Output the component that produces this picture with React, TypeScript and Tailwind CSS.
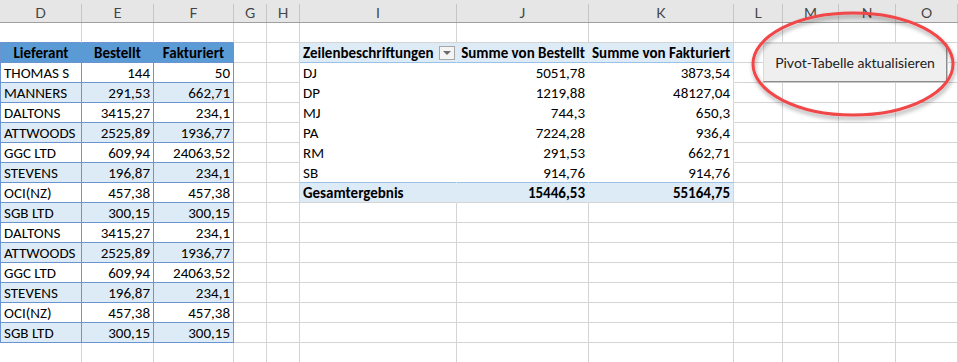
import clsx from 'clsx';

const COLS = 'grid grid-cols-[82px_72px_80px_33px_33px_157px_132px_145px_49px_56px_57px_1fr]';
const LETTERS = ['D', 'E', 'F', 'G', 'H', 'I', 'J', 'K', 'L', 'M', 'N', 'O'];

const lieferanten: [string, string, string][] = [
  ['THOMAS S', '144', '50'],
  ['MANNERS', '291,53', '662,71'],
  ['DALTONS', '3415,27', '234,1'],
  ['ATTWOODS', '2525,89', '1936,77'],
  ['GGC LTD', '609,94', '24063,52'],
  ['STEVENS', '196,87', '234,1'],
  ['OCI(NZ)', '457,38', '457,38'],
  ['SGB LTD', '300,15', '300,15'],
  ['DALTONS', '3415,27', '234,1'],
  ['ATTWOODS', '2525,89', '1936,77'],
  ['GGC LTD', '609,94', '24063,52'],
  ['STEVENS', '196,87', '234,1'],
  ['OCI(NZ)', '457,38', '457,38'],
  ['SGB LTD', '300,15', '300,15'],
];

const pivot: [string, string, string][] = [
  ['DJ', '5051,78', '3873,54'],
  ['DP', '1219,88', '48127,04'],
  ['MJ', '744,3', '650,3'],
  ['PA', '7224,28', '936,4'],
  ['RM', '291,53', '662,71'],
  ['SB', '914,76', '914,76'],
];

type CellProps = {
  text?: string;
  right?: boolean;
  bold?: boolean;
  className?: string;
  children?: React.ReactNode;
};

// one worksheet cell, gridline on the right and bottom by default
function Cell({ text, right, bold, className, children }: CellProps) {
  return (
    <div
      className={clsx(
        'h-5 px-[3px] leading-[20px] whitespace-nowrap border-r border-b',
        right && 'text-right',
        bold && 'font-bold',
        className ?? 'border-[#d4d4d4]',
      )}
    >
      {children ?? text}
    </div>
  );
}

const BLUE = 'border-[#6b93cf]';

function Row({ r }: { r: number }) {
  const cells: React.ReactNode[] = [];

  // left table D..F
  if (r === 1) {
    cells.push(<Cell key="d" className={clsx('border-[#d4d4d4] border-b-[#6b93cf]')} />);
    cells.push(<Cell key="e" className="border-[#d4d4d4] border-b-[#6b93cf]" />);
    cells.push(<Cell key="f" className="border-[#d4d4d4] border-b-[#6b93cf]" />);
  } else if (r === 2) {
    cells.push(<Cell key="d" text="Lieferant" bold className={clsx('bg-[#5b9bd5] text-center border-l', BLUE)} />);
    cells.push(<Cell key="e" text="Bestellt" bold className={clsx('bg-[#5b9bd5] text-center', BLUE)} />);
    cells.push(<Cell key="f" text="Fakturiert" bold className={clsx('bg-[#5b9bd5] text-center', BLUE)} />);
  } else if (r >= 3 && r <= 16) {
    const [a, b, c] = lieferanten[r - 3];
    const fill = r % 2 === 0 ? 'bg-[#ddebf7]' : 'bg-white';
    cells.push(<Cell key="d" text={a} className={clsx(fill, 'border-l', BLUE)} />);
    cells.push(<Cell key="e" text={b} right className={clsx(fill, BLUE)} />);
    cells.push(<Cell key="f" text={c} right className={clsx(fill, BLUE)} />);
  } else {
    cells.push(<Cell key="d" />, <Cell key="e" />, <Cell key="f" />);
  }

  // G, H
  cells.push(<Cell key="g" />, <Cell key="h" />);

  // pivot I..K
  if (r === 2) {
    cells.push(
      <Cell key="i" className="bg-[#ddebf7] border-b-[#9bc2e6] border-r-transparent">
        <div className="flex items-center justify-between h-full font-bold">
          <span>Zeilenbeschriftungen</span>
          <span className="flex items-center justify-center w-4 h-[14px] mr-[-2px] border border-[#a6a6a6] bg-[#f4f4f4]">
            <span className="w-0 h-0 border-l-[4px] border-r-[4px] border-t-[4px] border-l-transparent border-r-transparent border-t-[#6a6a6a]" />
          </span>
        </div>
      </Cell>,
    );
    cells.push(<Cell key="j" text="Summe von Bestellt" bold right className="bg-[#ddebf7] border-b-[#9bc2e6] border-r-transparent" />);
    cells.push(<Cell key="k" text="Summe von Fakturiert" bold right className="bg-[#ddebf7] border-b-[#9bc2e6] border-r-[#d4d4d4]" />);
  } else if (r >= 3 && r <= 8) {
    const [a, b, c] = pivot[r - 3];
    const bottom = r === 8 ? 'border-b-[#9bc2e6]' : 'border-b-transparent';
    cells.push(<Cell key="i" text={a} className={clsx('bg-white border-r-transparent', bottom)} />);
    cells.push(<Cell key="j" text={b} right className={clsx('bg-white border-r-transparent', bottom)} />);
    cells.push(<Cell key="k" text={c} right className={clsx('bg-white border-r-[#d4d4d4]', bottom)} />);
  } else if (r === 9) {
    cells.push(<Cell key="i" text="Gesamtergebnis" bold className="bg-[#ddebf7] border-[#d4d4d4] border-r-transparent" />);
    cells.push(<Cell key="j" text="15446,53" bold right className="bg-[#ddebf7] border-[#d4d4d4] border-r-transparent" />);
    cells.push(<Cell key="k" text="55164,75" bold right className="bg-[#ddebf7] border-[#d4d4d4]" />);
  } else {
    cells.push(<Cell key="i" />, <Cell key="j" />, <Cell key="k" />);
  }

  // L..O
  cells.push(<Cell key="l" />, <Cell key="m" />, <Cell key="n" />, <Cell key="o" />);

  return <div className={COLS}>{cells}</div>;
}

export default function App() {
  const rows = Array.from({ length: 17 }, (_, i) => i + 1);
  return (
    <div className="relative w-[958px] h-[362px] overflow-hidden bg-white text-[15px] text-black font-['Carlito','Calibri','Liberation_Sans',sans-serif]">
      {/* column headers */}
      <div className="h-[23px] bg-[#e6e6e6] pt-1 border-b border-[#9f9f9f]">
        <div className={clsx(COLS, 'h-full')}>
          {LETTERS.map((l) => (
            <div
              key={l}
              className="border-r border-[#c6c6c6] text-center text-[14px] leading-[18px] text-[#444] font-['Lato','Liberation_Sans',sans-serif]"
            >
              {l}
            </div>
          ))}
        </div>
      </div>

      {rows.map((r) => (
        <Row key={r} r={r} />
      ))}

      {/* button from the sheet */}
      <button className="absolute left-[763px] top-[43px] w-[184px] h-[39px] bg-[#efefef] border border-[#dadada] border-r-[#8c8c8c] border-b-[#8c8c8c] shadow-[1px_1px_0_#c8c8c8] text-[14px] text-[#222] font-['Lato','Liberation_Sans',sans-serif]">
        Pivot-Tabelle aktualisieren
      </button>

      {/* red ellipse drawn around the button */}
      <svg className="absolute left-[740px] top-0" width="218" height="130" viewBox="0 0 218 130">
        <defs>
          <filter id="sh" x="-10%" y="-10%" width="120%" height="130%">
            <feDropShadow dx="1" dy="3" stdDeviation="2" floodColor="#000" floodOpacity="0.35" />
          </filter>
        </defs>
        <ellipse cx="113" cy="64" rx="100" ry="51" fill="none" stroke="#f0464a" strokeWidth="3" filter="url(#sh)" />
      </svg>
    </div>
  );
}
